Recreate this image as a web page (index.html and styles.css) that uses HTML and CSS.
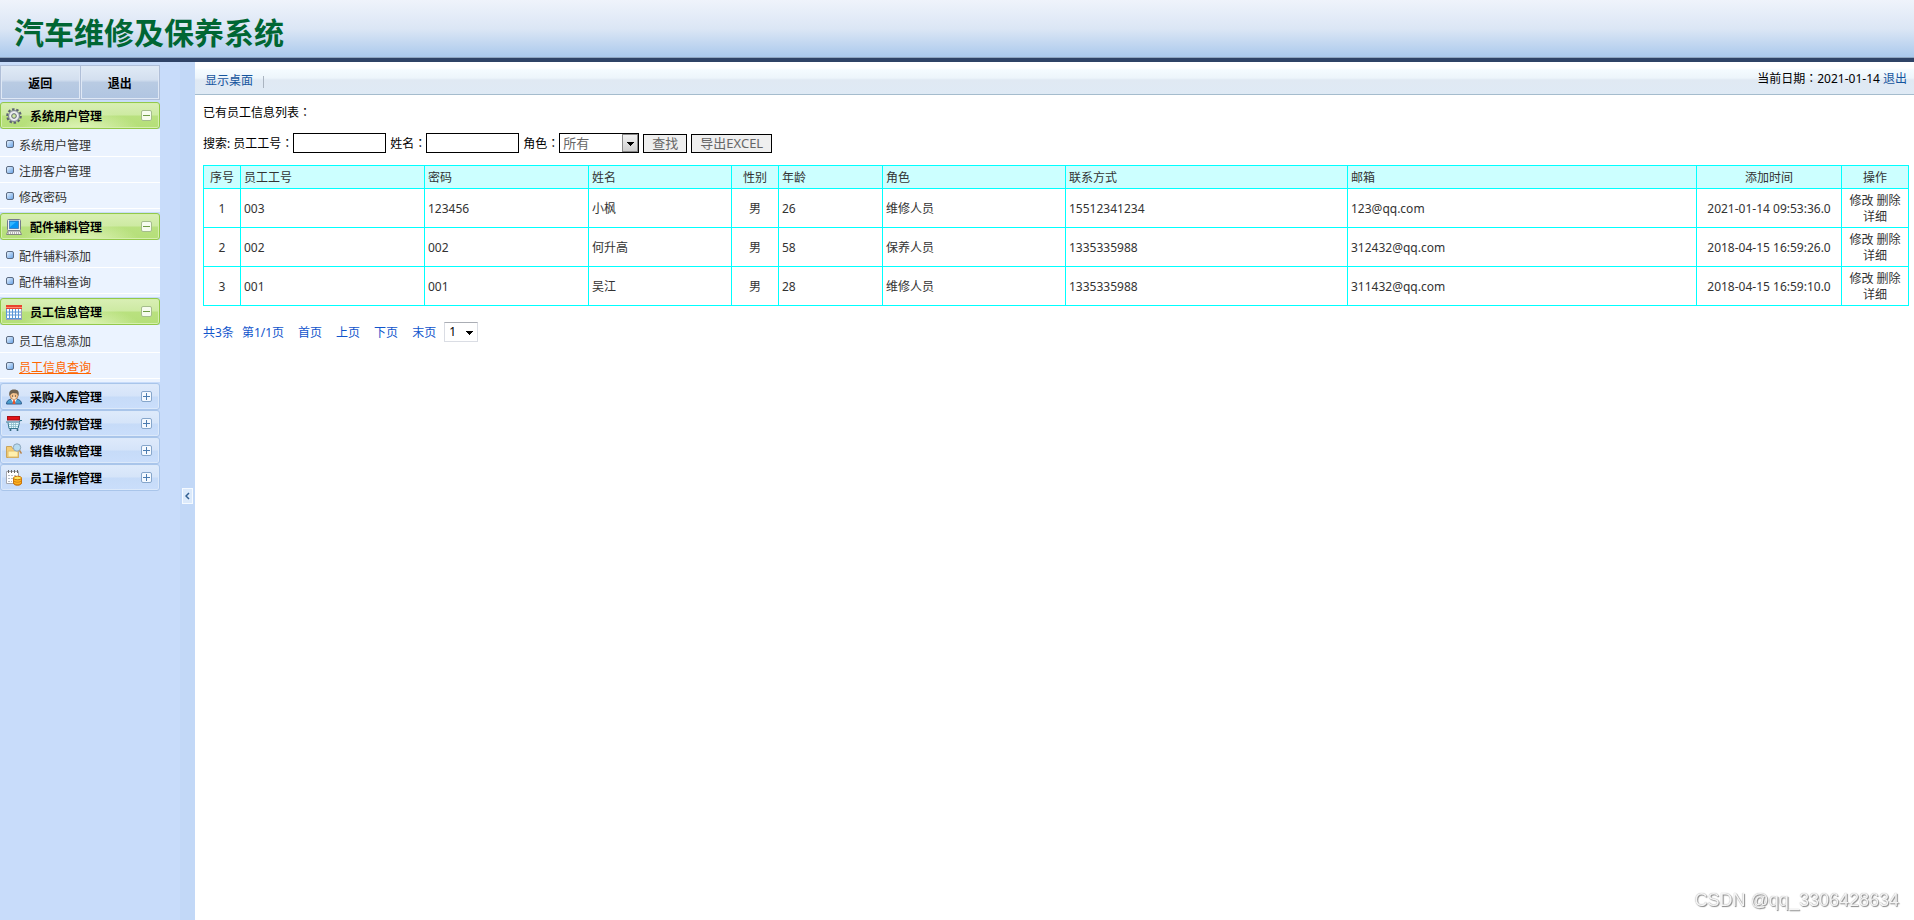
FILE: index.html
```html
<!DOCTYPE html>
<html lang="zh-CN">
<head>
<meta charset="utf-8">
<title>汽车维修及保养系统</title>
<link rel="stylesheet" href="styles.css">
</head>
<body>
<header class="banner"><h1>汽车维修及保养系统</h1></header>
<div class="frame">
  <aside class="side">
    <div class="side-main">
      <div class="side-buttons"><button type="button">返回</button><button type="button">退出</button></div>
      <nav>
        <section class="group">
          <button class="head open" type="button">
            <svg class="icon" viewBox="0 0 16 16"><circle cx="8" cy="8" r="6.7" fill="none" stroke="#5c6370" stroke-width="2.2" stroke-dasharray="2.5 1.7"/><circle cx="8" cy="8" r="5.5" fill="#d9dde2" stroke="#7b828d"/><circle cx="8" cy="8" r="3.5" fill="none" stroke="#f8f8f8"/><circle cx="8" cy="8" r="2.3" fill="#cfeaa0" stroke="#626975"/></svg>
            <span>系统用户管理</span>
            <svg class="toggle" viewBox="0 0 11 11"><rect x=".5" y=".5" width="10" height="10" rx="1.5" fill="#f6fcee" stroke="#a5bd8b"/><path d="M2 5.5h7" stroke="#6f9c46"/></svg>
          </button>
          <ul><li><a href="#">系统用户管理</a></li><li><a href="#">注册客户管理</a></li><li><a href="#">修改密码</a></li></ul>
        </section>
        <section class="group">
          <button class="head open" type="button">
            <svg class="icon" viewBox="0 0 16 16"><rect x="1.5" y=".5" width="13" height="11" rx="1" fill="#eef0f3" stroke="#747b8c"/><rect x="3.500" y="2" width="9" height="7.500" fill="#0595f5" stroke="#3b75b5" stroke-width=".8"/><path d="M4 8V3h6z" fill="#32b6ff"/><path d="M2 12h12l1.5 3.5H.5z" fill="#f5f5f5" stroke="#848484"/><path d="M2 14h12" stroke="#777" stroke-dasharray="1 1"/></svg>
            <span>配件辅料管理</span>
            <svg class="toggle" viewBox="0 0 11 11"><rect x=".5" y=".5" width="10" height="10" rx="1.5" fill="#f6fcee" stroke="#a5bd8b"/><path d="M2 5.5h7" stroke="#6f9c46"/></svg>
          </button>
          <ul><li><a href="#">配件辅料添加</a></li><li><a href="#">配件辅料查询</a></li></ul>
        </section>
        <section class="group">
          <button class="head open" type="button">
            <svg class="icon" viewBox="0 0 16 16"><rect y="1" width="16" height="14" fill="#fff"/><path d="M.5 4.500h15v10H.5zM.5 8h15M.5 11h15M3.500 4v11M6.500 4v11M9.500 4v11M12.500 4v11" fill="none" stroke="#5b96d6"/><path d="M0 1h16v4H0z" fill="#e8442e"/><path d="M0 3h16v1H0z" fill="#ff8d76"/><path d="M15.500 5v10M0 15.500h16" stroke="#9a9fb5"/></svg>
            <span>员工信息管理</span>
            <svg class="toggle" viewBox="0 0 11 11"><rect x=".5" y=".5" width="10" height="10" rx="1.5" fill="#f6fcee" stroke="#a5bd8b"/><path d="M2 5.5h7" stroke="#6f9c46"/></svg>
          </button>
          <ul><li><a href="#">员工信息添加</a></li><li><a class="current" href="#">员工信息查询</a></li></ul>
        </section>
        <section class="group">
          <button class="head" type="button">
            <svg class="icon" viewBox="0 0 16 16"><path d="M.5 15c0-3 2-4.500 5-5h5c3 .5 5 2 5 5z" fill="#4a9fce" stroke="#315f91"/><path d="M5 10l3 5 3-5z" fill="#fff"/><path d="M7.300 11h1.400l.8 4H6.500z" fill="#e7552c"/><circle cx="8" cy="6.500" r="4" fill="#f3c18c" stroke="#b57642" stroke-width=".7"/><path d="M3.500 7C2.500 3 4 .5 8 .5s5.500 2 4.500 6.500L11 4.500 7 4 5 5z" fill="#6e604d"/><path d="M6 7h1M9 7h1" stroke="#333"/><path d="M6.500 9h3" stroke="#fff"/></svg>
            <span>采购入库管理</span>
            <svg class="toggle" viewBox="0 0 11 11"><rect x=".5" y=".5" width="10" height="10" rx="1.5" fill="#f4f9ff" stroke="#86a6cb"/><path d="M2 5.5h7M5.500 2v7" stroke="#4b7baf"/></svg>
          </button>
        </section>
        <section class="group">
          <button class="head" type="button">
            <svg class="icon" viewBox="0 0 16 16"><rect x="1.500" y=".5" width="12" height="3.500" fill="#e31319" stroke="#a51118"/><path d="M2 6.500h11l-1 6H3z" fill="#e7fbff"/><path d="M3 8.500h9M3 10.500h9M5.500 7v5M7.500 7v5M9.500 7v5" stroke="#83b5c5" stroke-width=".7"/><path d="M0 6h13.500L14 4.500h2M2 6.500l1 6h9l1.500-6" fill="none" stroke="#397891"/><circle cx="4.500" cy="14" r="1" fill="#2c6075"/><circle cx="11.500" cy="14" r="1" fill="#2c6075"/></svg>
            <span>预约付款管理</span>
            <svg class="toggle" viewBox="0 0 11 11"><rect x=".5" y=".5" width="10" height="10" rx="1.5" fill="#f4f9ff" stroke="#86a6cb"/><path d="M2 5.5h7M5.500 2v7" stroke="#4b7baf"/></svg>
          </button>
        </section>
        <section class="group">
          <button class="head" type="button">
            <svg class="icon" viewBox="0 0 16 16"><path d="M.5 14.500v-11h5l1 2h6v9z" fill="#f4cd77" stroke="#c9a45c"/><path d="M2 14V8h10v6z" fill="#fff0ae" stroke="#e2bd6d"/><circle cx="11" cy="4.500" r="3.700" fill="#b8dcf1" stroke="#8ba5bb"/><path d="M13.500 7.500l2 3" stroke="#ba874e" stroke-width="1.500"/></svg>
            <span>销售收款管理</span>
            <svg class="toggle" viewBox="0 0 11 11"><rect x=".5" y=".5" width="10" height="10" rx="1.5" fill="#f4f9ff" stroke="#86a6cb"/><path d="M2 5.5h7M5.500 2v7" stroke="#4b7baf"/></svg>
          </button>
        </section>
        <section class="group">
          <button class="head" type="button">
            <svg class="icon" viewBox="0 0 16 16"><path d="M.5 1.500h12v9l-2 3H.5z" fill="#fff" stroke="#a5a8b0"/><path d="M2.500 0v3M5.500 0v3M8.500 0v3M11.500 0v3" stroke="#666"/><path d="M2 5.500h8M2 8.500h5M2 11.500h4" stroke="#b8bdc5" stroke-dasharray="2 1"/><path d="M7.500 8v5c0 3 8 3 8 0V8z" fill="#ffb31d" stroke="#c9760f"/><ellipse cx="11.500" cy="8" rx="4" ry="1.800" fill="#ffe45a" stroke="#c9760f"/><path d="M7.500 10.500c1 2.300 7 2.300 8 0M7.500 13c1 2.300 7 2.300 8 0" fill="none" stroke="#c9760f" stroke-width=".8"/></svg>
            <span>员工操作管理</span>
            <svg class="toggle" viewBox="0 0 11 11"><rect x=".5" y=".5" width="10" height="10" rx="1.5" fill="#f4f9ff" stroke="#86a6cb"/><path d="M2 5.5h7M5.500 2v7" stroke="#4b7baf"/></svg>
          </button>
        </section>
      </nav>
    </div>
    <div class="rail"><button type="button" aria-label="收起菜单"><svg viewBox="0 0 5 8"><path d="M4 1L1 4l3 3" fill="none" stroke="#315f91" stroke-width="1.500"/></svg></button></div>
  </aside>
  <main class="main">
    <div class="topbar">
      <a class="desk" href="#">显示桌面</a>
      <p>当前日期<span class="colon" lang="zh-TW">：</span>2021-01-14 <a href="#">退出</a></p>
    </div>
    <div class="content">
      <h2>已有员工信息列表<span class="colon" lang="zh-TW">：</span></h2>
      <form class="search">
        <span class="lead">搜索:</span>
        <label for="no">员工工号<span class="colon" lang="zh-TW">：</span></label><input id="no" type="text">
        <label for="name">姓名<span class="colon" lang="zh-TW">：</span></label><input id="name" type="text">
        <label for="role">角色<span class="colon" lang="zh-TW">：</span></label><select id="role"><option>所有</option></select>
        <button type="button">查找</button>
        <button type="button">导出EXCEL</button>
      </form>
      <table>
        <colgroup><col class="c-idx"><col class="c-no"><col class="c-pwd"><col class="c-name"><col class="c-sex"><col class="c-age"><col class="c-role"><col class="c-tel"><col><col class="c-time"><col class="c-op"></colgroup>
        <thead><tr><th class="mid">序号</th><th>员工工号</th><th>密码</th><th>姓名</th><th class="mid">性别</th><th>年龄</th><th>角色</th><th>联系方式</th><th>邮箱</th><th class="mid">添加时间</th><th class="mid">操作</th></tr></thead>
        <tbody>
          <tr><td class="mid">1</td><td>003</td><td>123456</td><td>小枫</td><td class="mid">男</td><td>26</td><td>维修人员</td><td>15512341234</td><td>123@qq.com</td><td class="mid">2021-01-14 09:53:36.0</td><td class="mid"><a href="#">修改</a> <a href="#">删除</a> <a href="#">详细</a></td></tr>
          <tr><td class="mid">2</td><td>002</td><td>002</td><td>何升高</td><td class="mid">男</td><td>58</td><td>保养人员</td><td>1335335988</td><td>312432@qq.com</td><td class="mid">2018-04-15 16:59:26.0</td><td class="mid"><a href="#">修改</a> <a href="#">删除</a> <a href="#">详细</a></td></tr>
          <tr><td class="mid">3</td><td>001</td><td>001</td><td>吴江</td><td class="mid">男</td><td>28</td><td>维修人员</td><td>1335335988</td><td>311432@qq.com</td><td class="mid">2018-04-15 16:59:10.0</td><td class="mid"><a href="#">修改</a> <a href="#">删除</a> <a href="#">详细</a></td></tr>
        </tbody>
      </table>
      <div class="pager">
        <span class="count">共3条</span><span class="pages">第1/1页</span>
        <a href="#">首页</a><a href="#">上页</a><a href="#">下页</a><a href="#">末页</a>
        <select aria-label="页码"><option>1</option></select>
      </div>
    </div>
  </main>
</div>
<div class="watermark">CSDN @qq_3306428634</div>
</body>
</html>
```

FILE: styles.css
```css
* { box-sizing: border-box; }
body {
  margin: 0;
  min-height: 100vh;
  display: flex;
  flex-direction: column;
  background: #fff;
  color: #000;
  font: 12px/16px "Noto Sans", "Noto Sans CJK SC", sans-serif;
}
h1, h2, p, ul { margin: 0; padding: 0; }
a { color: inherit; text-decoration: none; }
button, input, select { font: inherit; margin: 0; border-radius: 0; }
.colon { font-family: "Noto Sans CJK TC", sans-serif; line-height: 1; }

.banner {
  height: 62px;
  padding: 10px 14px 0;
  background: linear-gradient(#eff3fb, #dbe6f5 50%, #a9c8ec);
  border-bottom: 4px solid #2f4366;
  box-shadow: inset 0 -1px #8fa5c0;
}
.banner h1 {
  color: #006633;
  font-size: 30px;
  line-height: 46px;
  font-weight: 700;
}
.frame { flex: 1; display: flex; }

.side {
  width: 195px;
  flex: none;
  display: flex;
  background: #c8dcfa;
}
.side-main { width: 180px; padding-top: 3px; }
.side-buttons { display: flex; width: 160px; height: 35px; margin-bottom: 2px; }
.side-buttons button {
  flex: 1;
  padding: 2px 0 0;
  border: 1px solid #b0bfd8;
  box-shadow: inset 0 0 0 1px #dfe8f5;
  background: linear-gradient(#e0eaf6, #d3dfef 42%, #b9cbe3 50%, #b0c5e1);
  font-weight: 700;
}
.side-buttons button + button { border-left: 0; }
.group { width: 160px; }
.head {
  width: 160px;
  height: 27px;
  display: flex;
  align-items: center;
  padding: 0 7px 0 5px;
  border: 1px solid #a9c5ea;
  border-radius: 3px;
  background: linear-gradient(#deeafb, #d5e4f9 48%, #c6dbf8 52%, #cadefb);
  box-shadow: inset 0 0 0 1px #dce9fa;
  font-weight: 700;
  text-align: left;
}
.head.open {
  border-color: #93c94b;
  background: radial-gradient(ellipse at 50% 120%, #e9f9c8, transparent 55%), linear-gradient(#d9efb5, #cdeaa2 48%, #b9e17f 52%, #b5df79);
  box-shadow: inset 0 0 0 1px #d5efad;
}
.head span { flex: 1; padding: 3px 0 0 8px; }
.icon { width: 16px; height: 16px; flex: none; }
.toggle { width: 11px; height: 11px; flex: none; }
.group ul { list-style: none; padding: 2px 0 3px; margin-bottom: 1px; background: #ebf3ff; }
.group li {
  height: 26px;
  padding: 7px 0 0 6px;
  display: flex;
  border-bottom: 1px solid #fff;
  color: #333;
}
.group li::before {
  content: "";
  width: 6px;
  height: 6px;
  margin: 2px 6px 0 0;
  border: 1px solid #5c6b82;
  border-radius: 2px;
  background: linear-gradient(135deg, #e4f1ff, #6ba4e6);
}
.group li a { margin-left: -1px; }
.current { color: #f60; text-decoration: underline; }
.rail {
  flex: 1;
  display: flex;
  align-items: center;
  justify-content: center;
  background: #c2d8f7;
  padding-top: 10px;
}
.rail button {
  width: 11px;
  height: 16px;
  padding: 0;
  display: flex;
  align-items: center;
  justify-content: center;
  border: 1px solid #f5faff;
  background: #dceafb;
}
.rail svg { width: 5px; height: 8px; }

.main { flex: 1; min-width: 0; }
.topbar {
  height: 33px;
  display: flex;
  justify-content: space-between;
  padding: 9px 7px 0 10px;
  border-bottom: 1px solid #a5bccd;
  background: linear-gradient(#fff 6px, #f4fbff 8px, #edf5fb 16px, #e0e9f3 18px, #dfeaf5);
}
.topbar a { color: #15559e; }
.desk { height: 18px; padding: 2px 9px 0 0; }
.desk::after {
  content: "";
  display: inline-block;
  height: 12px;
  margin-left: 10px;
  border-left: 1px solid #aab4c0;
  vertical-align: middle;
}
.content { padding: 10px 5px 0 8px; }
h2 { font-size: 12px; font-weight: 400; height: 16px; }
.search { height: 20px; margin-top: 12px; display: flex; align-items: center; }
.search .lead { padding-top: 2px; margin-right: 3px; }
.search label { padding-top: 2px; }
.search input {
  width: 93px;
  height: 20px;
  padding: 0 2px;
  border: 1px solid #000;
  margin-right: 4px;
}
.search select {
  width: 80px;
  height: 20px;
  padding: 0 3px;
  border: 1px solid #000;
  appearance: none;
  font-size: 13px;
  color: #666;
  background:
    linear-gradient(#000, #000) 67px 8px / 7px 1px no-repeat,
    linear-gradient(#000, #000) 68px 9px / 5px 1px no-repeat,
    linear-gradient(#000, #000) 69px 10px / 3px 1px no-repeat,
    linear-gradient(#000, #000) 70px 11px / 1px 1px no-repeat,
    linear-gradient(#f1f1f1, #cfcfcf) 63px 1px / 14px 16px no-repeat,
    linear-gradient(#888, #888) 62px 0 / 16px 18px no-repeat,
    #fff;
}
.search button {
  height: 19px;
  padding: 0 8px;
  margin-left: 4px;
  border: 1px solid #000;
  background: #efefef;
  color: #666;
  font-size: 13px;
  line-height: 16px;
}
table {
  width: 100%;
  margin-top: 12px;
  border-collapse: collapse;
  table-layout: fixed;
  color: #333;
}
th, td { border: 1px solid #0ff; padding: 4px 3px 2px; text-align: left; font-weight: 400; }
th { background: #cff; height: 23px; }
td { height: 39px; }
.mid { text-align: center; }
.c-idx { width: 37px; }
.c-no { width: 184px; }
.c-pwd { width: 164px; }
.c-name { width: 143px; }
.c-sex { width: 47px; }
.c-age { width: 104px; }
.c-role { width: 183px; }
.c-tel { width: 282px; }
.c-time { width: 145px; }
.c-op { width: 67px; }
.pager { margin-top: 16px; display: flex; align-items: center; color: #15c; }
.pager span, .pager a { padding-top: 2px; }
.count { margin-right: 8px; }
.pager a { margin-left: 14px; }
.pager select {
  width: 34px;
  height: 20px;
  margin-left: 8px;
  padding: 0 4px;
  border: 1px solid #dadde4;
  border-top-color: #aaadb4;
  appearance: none;
  color: #000;
  background:
    linear-gradient(#000, #000) 21px 8px / 7px 1px no-repeat,
    linear-gradient(#000, #000) 22px 9px / 5px 1px no-repeat,
    linear-gradient(#000, #000) 23px 10px / 3px 1px no-repeat,
    linear-gradient(#000, #000) 24px 11px / 1px 1px no-repeat,
    #fff;
}
.watermark {
  position: fixed;
  right: 15px;
  bottom: 8px;
  color: #f4f4f4;
  font: 18px/24px "Liberation Sans", sans-serif;
  text-shadow: 1px 1px 1px #888, 0 0 1px #999;
}
```
